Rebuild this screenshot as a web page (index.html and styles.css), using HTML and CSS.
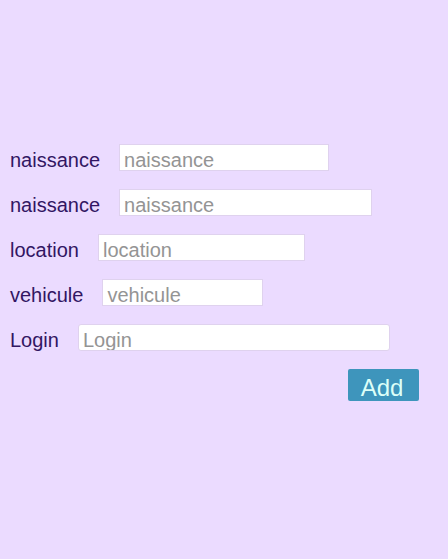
FILE: index.html
```html
<!DOCTYPE html>
<html lang="fr">
<head>
<meta charset="utf-8">
<meta name="viewport" content="width=device-width, initial-scale=1">
<title>Add</title>
<link rel="stylesheet" href="styles.css">
</head>
<body>
<form class="form">
  <div class="row"><label for="naissance-1">naissance</label><input class="w-210" id="naissance-1" type="text" placeholder="naissance"></div>
  <div class="row"><label for="naissance-2">naissance</label><input class="w-253" id="naissance-2" type="text" placeholder="naissance"></div>
  <div class="row"><label for="location">location</label><input class="w-207" id="location" type="text" placeholder="location"></div>
  <div class="row"><label for="vehicule">vehicule</label><input class="w-161" id="vehicule" type="text" placeholder="vehicule"></div>
  <div class="row"><label for="login">Login</label><input class="w-312 rounded" id="login" type="text" placeholder="Login"></div>
  <div class="actions"><button type="button">Add</button></div>
</form>
</body>
</html>
```
FILE: styles.css
```css
* {
  box-sizing: border-box;
}

body {
  margin: 0;
  min-height: 100vh;
  background: #ebdbff;
  color: #321663;
  font-family: "Liberation Sans", Arial, sans-serif;
  font-size: 20px;
}

.form {
  display: flex;
  flex-direction: column;
  gap: 18px;
  padding: 144px 29px 0 10px;
}

.row {
  display: flex;
  align-items: center;
  gap: 19px;
}

label {
  padding-top: 6px;
  line-height: 21px;
}

input {
  min-width: 0;
  height: 27px;
  padding: 6px 4px 0;
  border: 1px solid #dfd2ee;
  border-radius: 0;
  background: #fff;
  color: #321663;
  font: inherit;
}

input::placeholder {
  color: #949494;
  opacity: 1;
}

.rounded {
  border-radius: 3px;
}

.w-161 { width: 161px; }
.w-207 { width: 207px; }
.w-210 { width: 210px; }
.w-253 { width: 253px; }
.w-312 { width: 312px; }

.actions {
  display: flex;
  justify-content: flex-end;
}

button {
  width: 71px;
  height: 32px;
  padding: 6px 3px 0 0;
  border: 0;
  border-radius: 2px;
  background: #3e95bc;
  color: #dcfff8;
  font: inherit;
  font-size: 24px;
  line-height: 24px;
}
```
